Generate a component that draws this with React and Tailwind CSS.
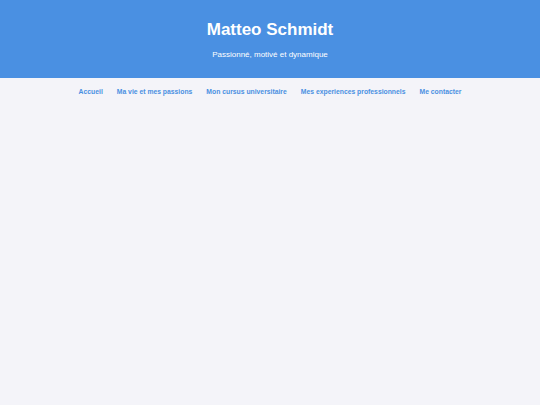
import React from 'react';

const links = [
  'Accueil',
  'Ma vie et mes passions',
  'Mon cursus universitaire',
  'Mes experiences professionnels',
  'Me contacter',
];

const App = () => {
  return (
    <div className="min-h-screen bg-[#f4f4f9] font-['Liberation_Sans',Arial,sans-serif]">
      {/* Header */}
      <header className="bg-[#4a90e2] text-white text-center pt-[20px] pb-[18px]">
        <h1 className="text-[17px] leading-[20px] font-bold">Matteo Schmidt</h1>
        <p className="mt-[10px] text-[8px] leading-[10px]">Passionné, motivé et dynamique</p>
      </header>

      {/* Navigation */}
      <nav className="pt-[9px]">
        <ul className="flex justify-center gap-[14px] text-[6.8px] leading-[10px] font-bold">
          {links.map((label) => (
            <li key={label}>
              <a href="#" className="text-[#4a90e2]">
                {label}
              </a>
            </li>
          ))}
        </ul>
      </nav>
    </div>
  );
};

export default App;
